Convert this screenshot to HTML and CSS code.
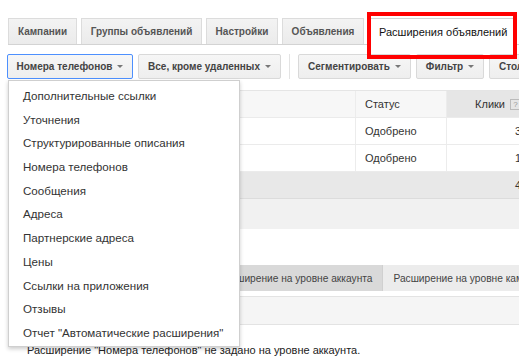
FILE: index.html
```html
<!DOCTYPE html>
<html lang="ru">
<head>
<meta charset="utf-8">
<title>Расширения объявлений</title>
<link rel="stylesheet" href="styles.css">
</head>
<body>
<div class="page">
  <div class="tabs">
    <div class="tab t-camp">Кампании</div>
    <div class="tab t-groups">Группы объявлений</div>
    <div class="tab t-settings">Настройки</div>
    <div class="tab t-ads">Объявления</div>
    <div class="tab tab-active">Расширения объявлений<span class="highlight"></span></div>
  </div>

  <div class="toolbar">
    <div class="btn-wrap">
      <div class="btn btn-focus b-type">Номера телефонов<span class="caret"></span></div>
      <div class="menu">
        <div class="menu-item">Дополнительные ссылки</div>
        <div class="menu-item">Уточнения</div>
        <div class="menu-item">Структурированные описания</div>
        <div class="menu-item">Номера телефонов</div>
        <div class="menu-item">Сообщения</div>
        <div class="menu-item">Адреса</div>
        <div class="menu-item">Партнерские адреса</div>
        <div class="menu-item">Цены</div>
        <div class="menu-item">Ссылки на приложения</div>
        <div class="menu-item">Отзывы</div>
        <div class="menu-item">Отчет "Автоматические расширения"</div>
      </div>
    </div>
    <div class="btn b-state">Все, кроме удаленных<span class="caret"></span></div>
    <div class="sep"></div>
    <div class="btn b-seg">Сегментировать<span class="caret"></span></div>
    <div class="btn b-filter">Фильтр<span class="caret"></span></div>
    <div class="btn">Столбцы<span class="caret"></span></div>
  </div>

  <div class="grid">
    <div class="row head">
      <div class="cell c-name">Номер телефона</div>
      <div class="cell c-status">Статус</div>
      <div class="cell c-clicks sorted">Клики<span class="help">?</span></div>
    </div>
    <div class="row">
      <div class="cell c-name">8 (800) 555-35-35 (для всех устройств)</div>
      <div class="cell c-status">Одобрено</div>
      <div class="cell c-clicks">3</div>
    </div>
    <div class="row">
      <div class="cell c-name">8 (800) 555-35-36</div>
      <div class="cell c-status">Одобрено</div>
      <div class="cell c-clicks">1</div>
    </div>
    <div class="row total">
      <div class="cell c-name">Итого</div>
      <div class="cell c-status"></div>
      <div class="cell c-clicks">4</div>
    </div>
    <div class="row foot"></div>
  </div>

  <div class="subtabs">
    <div class="subtab subtab-first">Расширение на уровне группы</div>
    <div class="subtab subtab-on">Расширение на уровне аккаунта</div>
    <div class="subtab">Расширение на уровне кампании</div>
  </div>
  <div class="subbar"></div>
  <div class="message">Расширение "Номера телефонов" не задано на уровне аккаунта.</div>
</div>
</body>
</html>
```

FILE: styles.css
```css
html, body {
  margin: 0;
  padding: 0;
  background: #fff;
  overflow: hidden;
}
body {
  font-family: "Liberation Sans", Arial, sans-serif;
  color: #222;
  width: 519px;
  height: 357px;
}
.page {
  padding: 18px 0 0 8px;
  width: 620px;
}
* { box-sizing: border-box; }

/* top tabs */
.tabs {
  display: flex;
  gap: 4px;
  height: 27px;
  border-bottom: 1px solid #d3d3d3;
}
.tab {
  height: 26px;
  display: flex;
  align-items: center;
  justify-content: center;
  border: 1px solid #dcdcdc;
  border-bottom: none;
  background: linear-gradient(#f3f3f3, #ebebeb);
  font-size: 10px;
  font-weight: bold;
  color: #555;
  white-space: nowrap;
}
.t-camp { width: 69px; }
.t-groups { width: 121px; }
.t-settings { width: 72px; }
.t-ads { width: 82px; }
.tab-active {
  position: relative;
  height: 27px;
  width: 146px;
  justify-content: flex-start;
  padding-left: 10px;
  background: #fff;
  border-color: #d3d3d3;
  font-size: 11px;
  font-weight: normal;
  color: #111;
}
.highlight {
  position: absolute;
  top: -7px;
  left: -2px;
  right: -4px;
  bottom: -14px;
  border: 4px solid #f00;
}

/* toolbar */
.toolbar {
  display: flex;
  align-items: center;
  gap: 5px;
  margin-top: 9px;
  height: 25px;
}
.btn-wrap {
  position: relative;
  margin-left: -1px;
}
.btn {
  height: 25px;
  padding: 0 9px;
  display: flex;
  align-items: center;
  justify-content: center;
  border: 1px solid #d9d9d9;
  border-radius: 2px;
  background: linear-gradient(#f6f6f6, #eeeeee);
  font-size: 10px;
  font-weight: bold;
  color: #444;
  white-space: nowrap;
}
.b-type { width: 126px; }
.b-state { width: 143px; }
.b-seg { width: 113px; }
.b-filter { width: 68px; }
.btn-focus {
  border-color: #4d90fe;
}
.caret {
  display: inline-block;
  margin-left: 5px;
  border-left: 3px solid transparent;
  border-right: 3px solid transparent;
  border-top: 3px solid #777;
}
.sep {
  width: 1px;
  height: 25px;
  background: #e3e3e3;
  margin: 0 3px;
}

/* dropdown menu */
.menu {
  position: absolute;
  top: 26px;
  left: 1px;
  width: 232px;
  padding: 3px 0 1px;
  background: #fff;
  border: 1px solid #cfcfcf;
  box-shadow: 0 2px 4px rgba(0,0,0,0.2);
  z-index: 10;
}
.menu-item {
  height: 23.7px;
  line-height: 23.7px;
  padding-left: 14px;
  font-size: 11.6px;
  color: #333;
  white-space: nowrap;
}

/* table */
.grid {
  margin-top: 11px;
  width: 522px;
}
.row {
  display: flex;
  height: 27px;
  border-bottom: 1px solid #ebebeb;
  font-size: 11px;
  color: #333;
}
.row.head {
  height: 28px;
  border-top: 1px solid #e5e5e5;
  background: #f7f7f7;
}
.cell {
  display: flex;
  align-items: center;
  padding: 0 9px;
  white-space: nowrap;
  overflow: hidden;
}
.c-name {
  width: 348px;
  border-right: 1px solid #ececec;
}
.c-status {
  width: 91px;
  border-right: 1px solid #ececec;
}
.c-clicks {
  width: 83px;
  justify-content: flex-end;
}
.sorted {
  background: #e6e6e6;
}
.help {
  display: inline-block;
  margin-left: 5px;
  width: 11px;
  height: 11px;
  line-height: 9px;
  border: 1px solid #bbb;
  font-size: 8px;
  color: #999;
  text-align: center;
}
.row.total {
  background: #e8e8e8;
  border-bottom-color: #dcdcdc;
}
.row.total .cell { border-right-color: transparent; }
.row.foot {
  height: 30px;
  background: #f1f1f1;
  border-bottom: none;
}

/* sub tabs */
.subtabs {
  display: flex;
  margin-top: 36px;
  height: 26px;
}
.subtab {
  display: flex;
  align-items: center;
  padding: 0 10px;
  background: #ececec;
  font-size: 10.2px;
  color: #444;
  white-space: nowrap;
}
.subtab-first {
  width: 201px;
}
.subtab-on {
  background: #d9d9d9;
  border-right: 1px solid #d0d0d0;
}
.subbar {
  margin-top: 5px;
  height: 29px;
  background: #f5f5f5;
  border-top: 1px solid #e3e3e3;
  border-bottom: 1px solid #e3e3e3;
}
.message {
  margin-top: 19px;
  padding-left: 19px;
  font-size: 11px;
  color: #222;
}
```
